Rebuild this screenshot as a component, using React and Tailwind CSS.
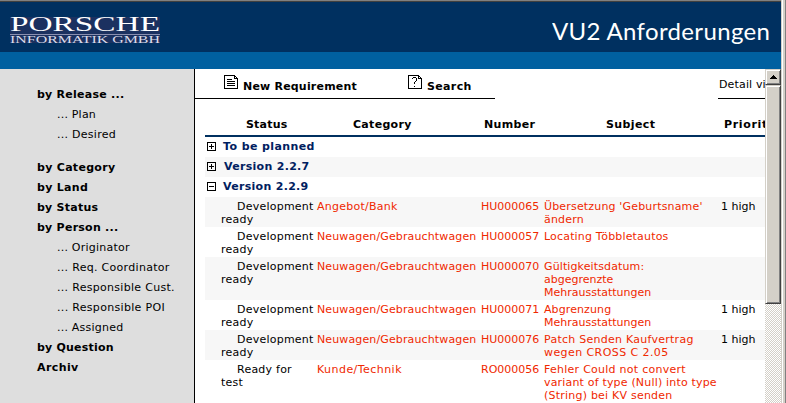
import React from "react";

const font = "font-['DejaVu_Sans',Verdana,sans-serif]";

const nav = [
  ["by Release ...", true, "tracking-[0.25px]"],
  ["... Plan", false, "tracking-[0.2px]"],
  ["... Desired", false, "tracking-[0.27px]"],
  null,
  ["by Category", true, "tracking-[0.3px]"],
  ["by Land", true, "tracking-[0.3px]"],
  ["by Status", true, "tracking-[0.25px]"],
  ["by Person ...", true, "tracking-[0.25px]"],
  ["... Originator", false, "tracking-[0.22px]"],
  ["... Req. Coordinator", false, "tracking-[0.3px]"],
  ["... Responsible Cust.", false, "tracking-[0.3px]"],
  ["... Responsible POI", false, "tracking-[0.32px]"],
  ["... Assigned", false, "tracking-[0.22px]"],
  ["by Question", true, "tracking-[0.2px]"],
  ["Archiv", true, "tracking-[0.4px]"],
];

const wide = "tracking-[0.13px]";

const rows = [
  { h: "h-[30px]", status: ["Development", "ready"], cat: ["Angebot/Bank", "tracking-[0.25px]"], num: "HU000065", subject: [["Übersetzung 'Geburtsname'", "tracking-[0.17px]"], ["ändern", "tracking-[0.2px]"]], prio: "1 high" },
  { h: "h-[30px]", status: ["Development", "ready"], cat: ["Neuwagen/Gebrauchtwagen", wide], num: "HU000057", subject: [["Locating Többletautos", "tracking-[0.17px]"]], prio: "" },
  { h: "h-[43px]", status: ["Development", "ready"], cat: ["Neuwagen/Gebrauchtwagen", wide], num: "HU000070", subject: [["Gültigkeitsdatum:", "tracking-[0.12px]"], ["abgegrenzte", ""], ["Mehrausstattungen", ""]], prio: "" },
  { h: "h-[30px]", status: ["Development", "ready"], cat: ["Neuwagen/Gebrauchtwagen", wide], num: "HU000071", subject: [["Abgrenzung", "tracking-[0.1px]"], ["Mehrausstattungen", ""]], prio: "1 high" },
  { h: "h-[30px]", status: ["Development", "ready"], cat: ["Neuwagen/Gebrauchtwagen", wide], num: "HU000076", subject: [["Patch Senden Kaufvertrag", "tracking-[0.25px]"], ["wegen CROSS C 2.05", "tracking-[0.42px]"]], prio: "1 high" },
  { h: "h-[43px]", status: ["Ready for", "test"], cat: ["Kunde/Technik", "tracking-[0.45px]"], num: "RO000056", subject: [["Fehler Could not convert", "tracking-[0.26px]"], ["variant of type (Null) into type", "tracking-[0.18px]"], ["(String) bei KV senden", "tracking-[0.22px]"]], prio: "" },
];

function PageIcon({ search }) {
  return (
    <svg width="14" height="14" viewBox="0 0 14 14" fill="none" stroke="#000" shapeRendering="crispEdges" className="shrink-0">
      <path d="M.5 .5H10.5L13.5 3.5V13.5H.5Z" />
      <path d="M10.5 .5V3.5H13.5" />
      {search ? (
        <path d="M4 3.5H5M5 2.5H8M8.5 3V6M7 6.5H8M6.5 7V9M6 11.5H7" />
      ) : (
        <path d="M3 4.5H8M3 6.5H11M3 8.5H11M3 10.5H11" />
      )}
    </svg>
  );
}

function Toggle({ open }) {
  return (
    <svg width="9" height="9" viewBox="0 0 9 9" fill="none" stroke="#000" shapeRendering="crispEdges" className="mt-[5px] ml-[2px] shrink-0">
      <path d="M.5 .5H8.5V8.5H.5Z" />
      <path d={open ? "M2 4.5H7" : "M2 4.5H7M4.5 2V7"} />
    </svg>
  );
}

function Group({ label, open, shaded, indent }) {
  return (
    <div className={`flex h-5 ${shaded ? "bg-[#f7f7f7]" : ""}`}>
      <Toggle open={open} />
      <span className={`${indent} font-bold leading-5 text-[#002060]`}>{label}</span>
    </div>
  );
}

function Header() {
  return (
    <header className="shrink-0">
      <div className="h-px bg-[#808080]" />
      <div className="h-px bg-[#404040]" />
      <div className="flex h-[50px] items-start justify-between bg-[#003060]">
        <div className="mt-[15px] ml-[10px] h-[26px] w-[150px] bg-[#1b3160]">
          <svg width="150" height="26" viewBox="0 0 150 26" className="overflow-visible font-['Liberation_Serif',serif]">
            <text x="0" y="14.3" fontSize="21" fill="#fff" textLength="150" lengthAdjust="spacingAndGlyphs">PORSCHE</text>
            <rect x="0" y="17" width="150" height="1" fill="#8a8fb0" />
            <text x="0" y="25.7" fontSize="10" fill="#dcdcea" textLength="150" lengthAdjust="spacingAndGlyphs">INFORMATIK GMBH</text>
          </svg>
        </div>
        <svg width="229" height="50" fill="#fff" className="font-[Lato,sans-serif]">
          <text x="0" y="38" fontSize="24" textLength="218" lengthAdjust="spacing">VU2 Anforderungen</text>
        </svg>
      </div>
      <div className="h-[17px] bg-[#0060a0]" />
    </header>
  );
}

function Sidebar() {
  return (
    <nav className="w-[195px] shrink-0 border-r border-black bg-[#dedede] pt-4">
      {nav.map((item, i) =>
        item ? (
          <div key={i} className={`h-5 leading-5 ${item[1] ? "pl-[37px] font-bold" : "pl-[57px]"} ${item[2]}`}>
            {item[0]}
          </div>
        ) : (
          <div key={i} className="h-[13px]" />
        )
      )}
    </nav>
  );
}

function Scrollbar() {
  return (
    <div className="flex w-4 shrink-0 flex-col bg-[repeating-conic-gradient(#d4d0c8_0_25%,#fff_0_50%)] bg-[length:2px_2px]">
      <div className="flex h-4 items-center justify-center border border-t-[#d4d0c8] border-r-[#404040] border-b-[#404040] border-l-[#d4d0c8] bg-[#d4d0c8] shadow-[inset_1px_1px_#fff,inset_-1px_-1px_#808080]">
        <svg width="7" height="4" viewBox="0 0 7 4" shapeRendering="crispEdges">
          <path d="M3 0H4V1H5V2H6V3H7V4H0V3H1V2H2V1H3Z" />
        </svg>
      </div>
      <div className="h-[219px] border border-t-[#d4d0c8] border-r-[#404040] border-b-[#404040] border-l-[#d4d0c8] bg-[#d4d0c8] shadow-[inset_1px_1px_#fff,inset_-1px_-1px_#808080]" />
    </div>
  );
}

export default function App() {
  return (
    <div className={`flex h-[403px] w-[786px] overflow-hidden bg-white text-[11px] whitespace-nowrap text-black ${font}`}>
      <div className="flex w-[781px] shrink-0 flex-col">
        <Header />
        <div className="flex min-h-0 flex-1">
          <Sidebar />
          <main className="w-[570px] shrink-0 overflow-hidden">
            <div className="flex h-[30px] justify-between">
              <div className="flex w-[300px] border-b border-black pt-[6px] pl-[29px]">
                <div className="flex w-[184px] gap-[5px]">
                  <PageIcon />
                  <span className="pt-1 leading-4 font-bold tracking-[0.2px]">New Requirement</span>
                </div>
                <div className="flex gap-[5px]">
                  <PageIcon search />
                  <span className="pt-1 leading-4 font-bold tracking-[0.35px]">Search</span>
                </div>
              </div>
              <div className="w-[47px] overflow-hidden border-b border-black pt-2 pl-px leading-4 tracking-[0.15px]">Detail view</div>
            </div>
            <div className="ml-[10px] flex h-[38px] border-b-2 border-[#003060] pt-[18px] leading-4 font-bold">
              <div className="w-[107px] shrink-0 pl-[41px] tracking-[0.2px]">Status</div>
              <div className="w-[131px] shrink-0 pl-[41px] tracking-[0.3px]">Category</div>
              <div className="w-[122px] shrink-0 pl-[41px] tracking-[0.35px]">Number</div>
              <div className="w-[159px] shrink-0 pl-[41px] tracking-[0.4px]">Subject</div>
              <div className="tracking-[0.65px]">Priority</div>
            </div>
            <div className="ml-[10px] tracking-[0.3px]">
              <Group label="To be planned" indent="ml-[7px] tracking-[0.4px]" />
              <Group label="Version 2.2.7" indent="ml-[8px]" shaded />
              <Group label="Version 2.2.9" indent="ml-[7px]" open />
            </div>
            <div className="ml-[10px]">
              {rows.map((r, i) => (
                <div key={r.num} className={`flex ${r.h} pt-[3px] leading-[13px] ${i % 2 ? "" : "bg-[#f7f7f7]"}`}>
                  <div className="w-[112px] shrink-0 pl-4 tracking-[0.23px]">
                    <div className="pl-4">{r.status[0]}</div>
                    <div>{r.status[1]}</div>
                  </div>
                  <div className={`w-[164px] shrink-0 text-[#f02800] ${r.cat[1]}`}>{r.cat[0]}</div>
                  <div className="w-[63px] shrink-0 text-[#f02800]">{r.num}</div>
                  <div className="w-[177px] shrink-0 text-[#f02800]">
                    {r.subject.map(([text, tracking]) => (
                      <div key={text} className={tracking}>{text}</div>
                    ))}
                  </div>
                  <div>{r.prio}</div>
                </div>
              ))}
            </div>
          </main>
          <Scrollbar />
        </div>
      </div>
      <div className="w-px bg-[#d4d0c8]" />
      <div className="w-px bg-white" />
      <div className="w-px bg-[#d4d0c8]" />
      <div className="w-px bg-[#d4d0c8]" />
      <div className="w-px bg-[#808080]" />
    </div>
  );
}
